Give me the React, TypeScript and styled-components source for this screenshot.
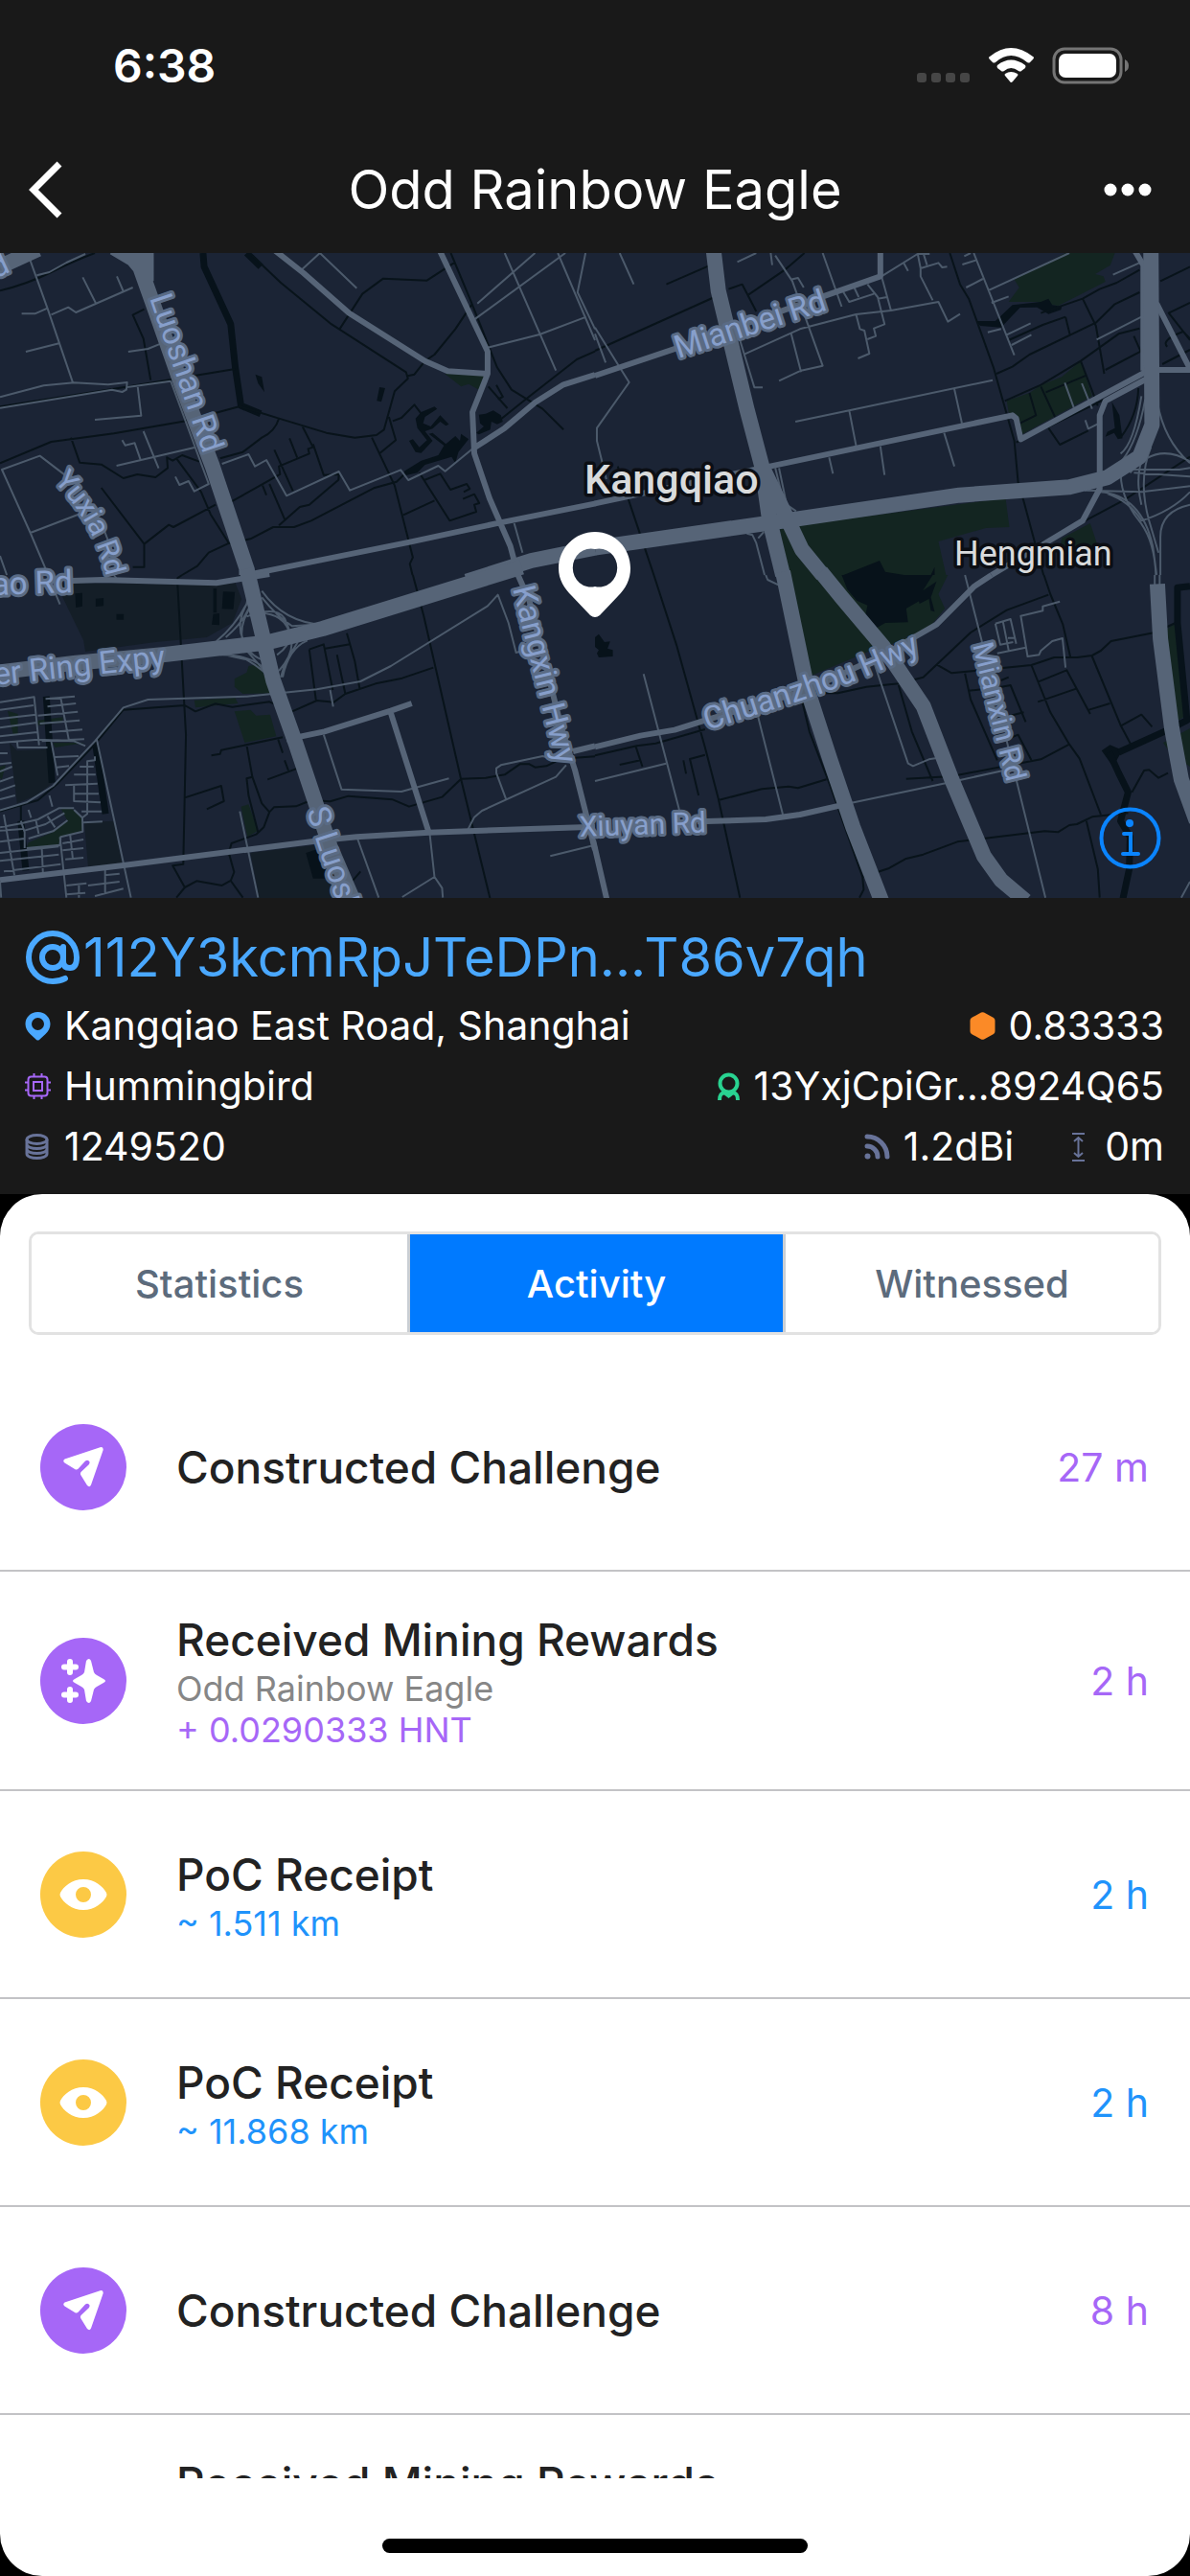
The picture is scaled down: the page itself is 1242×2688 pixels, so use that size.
import React, { useState } from "react";
import styled, { createGlobalStyle } from "styled-components";

const colors = {
  chrome: "#191919",
  sky: "#4aa8ff",
  purple: "#a667f7",
  amber: "#fcc945",
  blue: "#1f93fb",
  slate: "#687399",
  ink: "#222222",
};

const GlobalStyle = createGlobalStyle`
  * { box-sizing: border-box; }
  body {
    margin: 0;
    background: #000;
    font-family: Inter, "Liberation Sans", sans-serif;
    -webkit-font-smoothing: antialiased;
  }
  button { font: inherit; border: 0; background: none; padding: 0; cursor: pointer; }
  p, h1, h2, ul { margin: 0; padding: 0; }
  svg { display: block; flex: none; }
`;

const Screen = styled.main`
  display: flex;
  flex-direction: column;
  height: 100vh;
  overflow: hidden;
  background: #000;
`;

const StatusBar = styled.div`
  display: flex;
  align-items: center;
  justify-content: space-between;
  height: 132px;
  padding: 4px 64px 0 118px;
  background: ${colors.chrome};
  color: #fff;
  font-size: 48px;
  font-weight: 600;
  flex: none;
`;

const StatusIcons = styled.div`
  display: flex;
  align-items: center;
`;

const NavBar = styled.header`
  display: grid;
  grid-template-columns: 120px 1fr 120px;
  align-items: center;
  height: 132px;
  padding: 0 30px;
  background: ${colors.chrome};
  color: #fff;
  flex: none;
`;

const NavTitle = styled.h1`
  font-size: 56px;
  line-height: 72px;
  font-weight: 400;
  text-align: center;
  white-space: nowrap;
`;

const NavButton = styled.button<{ $end?: boolean }>`
  display: flex;
  align-items: center;
  justify-content: ${(p) => (p.$end ? "flex-end" : "flex-start")};
  height: 88px;
  padding-right: ${(p) => (p.$end ? "10px" : "0")};
  color: #fff;
`;

const MapPanel = styled.section`
  position: relative;
  height: 673px;
  background: #1b2435;
  overflow: hidden;
  flex: none;
`;

const MapInfoButton = styled.button`
  position: absolute;
  right: 30px;
  bottom: 30px;
  width: 65px;
  height: 65px;
`;

const Details = styled.section`
  display: flex;
  flex-direction: column;
  padding: 21px 27px 18px 26px;
  background: ${colors.chrome};
  color: #fff;
  flex: none;
`;

const Address = styled.h2`
  display: flex;
  align-items: center;
  gap: 3px;
  height: 81px;
  font-size: 56px;
  line-height: 80px;
  font-weight: 400;
  color: ${colors.sky};
`;

const DetailRow = styled.div`
  display: flex;
  justify-content: space-between;
  height: 63px;
`;

const DetailGroup = styled.div`
  display: flex;
  gap: 54px;
`;

const Detail = styled.span`
  display: flex;
  align-items: center;
  gap: 14px;
  font-size: 41px;
  line-height: 63px;
  white-space: nowrap;
`;

const Sheet = styled.section`
  display: flex;
  flex-direction: column;
  flex: 1;
  min-height: 0;
  padding-top: 39px;
  background: #fff;
  border-radius: 44px;
`;

const Tabs = styled.div`
  display: grid;
  grid-template-columns: repeat(3, 1fr);
  height: 108px;
  margin: 0 30px 30px;
  border: 3px solid #e2e2e2;
  border-radius: 10px;
  overflow: hidden;
  flex: none;
`;

const Tab = styled.button<{ $active: boolean }>`
  background: ${(p) => (p.$active ? "#007aff" : "#fff")};
  color: ${(p) => (p.$active ? "#fff" : "#5c6b7c")};
  font-size: 40px;
  font-weight: 500;

  & + & {
    border-left: 3px solid #c9ced4;
  }
`;

const ActivityList = styled.ul`
  flex: 1;
  min-height: 0;
  overflow: hidden;
  list-style: none;
`;

const ActivityRow = styled.li`
  display: flex;
  align-items: center;
  min-height: 217px;
  padding: 41px 43px 40px 42px;
  border-bottom: 2px solid #c3c3c6;
`;

const Badge = styled.span<{ $color: string }>`
  display: flex;
  align-items: center;
  justify-content: center;
  width: 90px;
  height: 90px;
  margin-right: 52px;
  border-radius: 50%;
  background: ${(p) => p.$color};
  color: #fff;
  flex: none;
`;

const RowBody = styled.div`
  flex: 1;
`;

const RowTitle = styled.p`
  font-size: 46px;
  line-height: 60px;
  font-weight: 500;
  color: ${colors.ink};
`;

const RowNote = styled.p<{ $color: string }>`
  font-size: 36px;
  line-height: 43px;
  color: ${(p) => p.$color};
`;

const RowTime = styled.time<{ $color: string }>`
  font-size: 41px;
  color: ${(p) => p.$color};
`;

const HomeArea = styled.footer`
  display: flex;
  justify-content: center;
  height: 102px;
  padding-top: 63px;
  flex: none;
`;

const HomeIndicator = styled.span`
  width: 444px;
  height: 15px;
  border-radius: 8px;
  background: #000;
`;

const MapSvg = styled.svg`
  width: 100%;
  height: 100%;

  path { vector-effect: non-scaling-stroke; stroke-linejoin: round; }
`;

const RoadLabel = styled.text<{ $small?: boolean }>`
  font-family: Roboto, "Liberation Sans", sans-serif;
  font-size: ${(p) => (p.$small ? 30 : 33)}px;
  fill: #879fcb;
  stroke: #5a6b84;
  stroke-width: 6px;
  stroke-linejoin: round;
  paint-order: stroke;
`;

const PlaceLabel = styled.text<{ $size: number; $weight: number }>`
  font-family: Roboto, "Liberation Sans", sans-serif;
  font-size: ${(p) => p.$size}px;
  font-weight: ${(p) => p.$weight};
  fill: #d9dbdc;
  stroke: #0b0e14;
  stroke-width: 7px;
  stroke-linejoin: round;
  paint-order: stroke;
`;

/* Map geometry, one entry for each quarter of the map. */
type Tile = {
  origin: [number, number];
  ground?: string;
  parks: string;
  ponds: string;
  river?: string;
  streams: string;
  lanes: string;
  roads: string;
  ways: string;
};

const tiles: Tile[] = [
  {
    origin: [0, -4],
    parks: "M1172 390 L1282 394 L1262 440 L1235 422 L1215 430Z",
    ponds:
      "M673 392 L690 400 L697 448 L680 420Z M1000 432 L1015 435 L1005 478 L993 475Z M1095 530 L1110 510 L1145 493 L1152 500 L1120 525 L1115 545 L1135 555 L1160 520 L1183 548 L1175 553 L1160 540 L1140 562 L1120 570 L1140 600 L1110 638 L1095 635 L1078 600 L1088 595 L1105 620 L1125 598 L1100 560Z M1065 695 L1110 662 L1155 645 L1170 615 L1130 578 L1140 575 L1175 610 L1200 585 L1212 600 L1215 578 L1235 595 L1208 635 L1200 670 L1190 650 L1120 675 L1100 700 L1070 708Z M1255 575 L1275 555 L1265 545 L1262 518 L1280 515 L1300 505 L1320 520 L1325 540 L1310 548 L1295 540 L1292 565 L1262 580Z",
    river: "M535 12 L538 55 L608 235 L620 370 L635 490 L687 515 M650 12 L687 55",
    streams:
      "M0 130 Q70 110 135 72 T250 12 M380 188 L350 206 L378 280 L397 410 M0 493 L340 430 L620 375 M0 670 L135 603 L300 577 L490 538 L632 492 L735 530 L860 575 L935 590 L992 582 L1012 565 L1040 445 L1075 405 L1070 385 L870 232 L740 105 L665 20 M895 250 L955 140 L1010 92 L1125 98 L1200 40 M1188 12 L1240 160 L1310 370 L1348 440 L1430 500 L1485 565 M1245 170 L1200 250 L1145 330 L1120 350 L1092 392 L1075 397 M187 590 L210 668 L267 674 L325 717 L362 705 L410 714 L442 685 L440 652 L455 662 L480 645 L525 665 M465 655 L530 760 L555 830 L603 920 M267 747 L380 923 L380 995 L350 995 M380 923 L445 863 L457 870 L568 800 M480 1020 L520 992 L550 950 L600 922 L660 907 L720 870 L775 870 L820 850 L985 748 L1045 728 L1070 700 M735 530 Q725 570 690 590 L640 635 L580 655 M797 555 L825 620 L812 625 L815 640 L735 680 L738 705 L610 790 M825 610 L853 707 L893 705 L892 722 L815 800 L790 807 L735 865 M763 592 L783 652 M723 628 L772 757 M710 735 L750 845 M692 740 L702 770 M980 590 L1000 640 L1040 740 L1088 965 L1080 985 L1087 1020 M1000 640 L1043 598 L1025 525 M1035 538 L1058 528 L1092 487 L1110 515 M1105 700 L1185 850 L1255 822 L1250 800 L1263 795 L1250 767 L1220 782 M1118 723 L1160 703 L1187 753 L1230 735 L1238 750 L1222 760 M1145 787 L1063 832 M1322 530 L1385 470 L1520 345 L1568 320 M1287 430 L1337 498 M1308 425 L1325 462 L1312 470",
    lanes:
      "M75 20 L125 185 L192 418 M97 82 L130 72 L175 42 L225 15 M57 202 H92 L125 185 M135 205 L180 182 L200 198 L350 120 M218 88 L252 168 M308 85 L325 132 M68 321 L158 294 M338 321 L390 312 L425 295 M0 463 L115 427 L195 418 L285 424 L335 417 L333 440 L322 447 L295 440 L0 497 M335 432 L450 413 M363 432 L372 521 L250 534 M307 678 L515 620 M378 570 L418 686 M322 598 L330 614 L355 607 L370 658 M450 413 L550 735 L512 758 L497 726 L473 738 L462 712 M585 672 L655 642 L672 680 L702 660 L755 772 L893 696 L922 755 L1056 691 L1076 723 L1155 678 L1173 695 L1250 620 M180 715 L105 647 L5 690 L80 888 L120 1000 M80 888 L225 822 M265 850 L305 975 V1020 M0 960 L18 1020 M790 70 L843 12 L940 122 M1258 170 L1410 12 M1250 220 L1490 12 M1330 12 L1465 380 M1470 12 L1568 285 M1543 12 L1522 135 L1568 250 M1285 308 L1422 267 L1545 212 M1355 858 L1377 950",
    roads:
      "M720 0 L800 75 L920 200 L1120 350 L1180 382 L1285 390 M1157 0 L1285 320 V390 L1245 510 L1250 640 L1290 780 L1345 930 L1365 1020 M1250 622 L1330 560 L1410 480 L1485 424 L1568 393 M670 1015 L1080 917 L1315 857 L1570 796",
    ways:
      "M300 -5 L350 30 L385 80 M385 0 L385 100 M355 10 L400 160 L480 430 L560 680 L650 1000 V1020 M-10 60 L100 0 M1568 935 L1400 975 L1230 1040",
  },
  {
    origin: [621, -4],
    parks:
      "M1105 95 L1240 12 H1370 L1358 50 L1318 78 L1340 85 L1345 102 L1220 178 L1165 165 L1090 165 L1118 120Z M1085 475 L1145 450 L1175 425 L1230 400 L1280 350 L1310 460 L1125 580 L1118 530 L1090 510Z M530 865 L1082 780 L1092 870 L1030 873 L905 915 L925 1020 H600Z M487 875 H510 L590 1020 H510Z M1230 905 L1305 858 L1325 930 L1225 935Z",
    ponds:
      "M1005 225 H1055 L1100 175 L1175 165 L1195 155 L1205 175 L1230 180 L1228 190 L1195 203 L1165 182 L1120 183 L1070 245 L1015 240Z M1362 478 L1382 520 L1390 592 L1378 595 L1368 575 L1345 587 L1350 572 L1370 560Z M655 1020 L750 975 L765 1010 L815 1020Z M885 1020 L895 995 V1020Z",
    streams:
      "M188 110 L300 52 M352 125 L388 110 L425 195 M405 142 L500 65 L552 12 M0 318 L315 150 M935 12 L962 110 L985 155 L1050 370 L1105 600 L1115 730 L1130 790 L1182 1020 M1568 55 L1490 100 M1435 65 L1375 105 L1330 125 L1285 155 L1175 200 M1285 155 L1320 240 L1342 390 M1435 135 L1370 172 L1320 230 L1145 330 L1100 368 L1058 390 M1435 248 L1380 265 L1280 350 L1175 425 L1080 475 M1240 212 L1180 237 L1090 285 M1240 212 L1252 270 M1280 350 L1325 490 M1145 450 L1162 520 L1120 545 M1175 430 L1212 525 M1188 448 L1295 395 M1110 605 L1455 405 M1195 560 L1225 612 L1300 568 M1432 435 Q1430 520 1385 590 M1420 272 L1438 320 L1345 378 M1568 168 L1512 200 L1568 285 M1508 305 Q1490 285 1550 258 L1568 280 M1495 360 L1568 315 M60 680 L90 790 L155 1020 M1150 930 L1205 905 L1395 785 L1568 650",
    lanes:
      "M65 12 L102 110 M375 40 L425 12 M463 12 L467 50 M475 20 L520 100 L600 365 L543 380 L485 412 M515 95 L535 90 L550 120 M600 12 L650 180 M395 328 L540 250 L688 204 L780 192 L905 165 L930 227 L962 203 M382 285 L420 433 H442 M517 265 L543 385 M688 204 L698 250 L710 255 L723 327 L693 342 M718 110 L745 150 L763 235 L735 248 L740 272 L718 282 M755 85 L780 192 M650 125 L670 165 L735 140 M683 120 L695 150 M745 155 L770 150 M755 85 L850 15 H882 M850 12 L858 60 L905 43 L915 57 L928 55 M858 60 V85 L890 160 M865 12 L875 50 M812 40 L825 68 M998 12 L1105 332 M973 22 L990 12 M968 48 L1003 35 M978 120 L1022 93 M1035 130 L1250 12 M1045 168 L1090 148 M1085 268 L1148 232 M1035 260 L1070 250 M1098 300 L1150 268 M1365 80 L1440 40 M1322 283 L1440 212 M0 245 L65 370 L90 417 L5 560 V600 L30 720 M0 265 L28 355 M528 540 L670 505 L1048 410 M670 505 L688 615 M947 438 L967 545 M920 575 L947 680 M752 617 L763 707 M617 652 L627 703 M1238 418 L1262 497 M1283 420 L1310 500 M1292 535 L1300 562 L1325 547 M485 685 L505 800 L530 820 M475 685 L497 790 M400 890 L415 895 L425 920 L447 1020 M445 885 L430 905 M1450 470 Q1430 600 1390 660 Q1370 760 1440 860 Q1475 920 1478 1020 M1440 460 Q1420 610 1385 640 M1482 480 Q1500 600 1568 670 M1410 700 Q1480 600 1568 665 M1420 690 H1540 L1568 685 M1420 700 L1568 712 M1290 755 L1440 760 L1568 742 M1330 760 Q1440 770 1470 930 L1480 1020 M1350 765 Q1410 790 1440 850 Q1520 820 1568 760 M1465 620 Q1430 720 1460 850 L1485 950 M1450 640 Q1420 700 1440 800 M1568 800 Q1490 820 1490 900 V1020",
    roads:
      "M0 396 L215 310 L500 190 L752 85 V0 M0 796 L440 685 L1100 520 L1110 530 L1122 595 L1450 385 M1045 1020 L1215 900 L1285 850 L1330 750 V520 L1345 475 L1455 405 M1480 170 L1568 375 M1450 378 H1568 M1420 0 L1445 50 V380",
    ways:
      "M312 0 L325 130 L400 500 L440 680 L460 850 L495 1020 M440 680 L505 840 L545 940 L600 1020 M0 935 L500 850 L960 770 L1250 745 L1350 715 L1435 650 L1468 550 L1465 0",
  },
  {
    origin: [0, 336],
    ground:
      "M165 25 L570 30 L620 25 L637 75 L612 150 L545 195 L410 210 L225 240 L220 205 L165 70Z M25 525 L45 550 L130 545 L140 650 L95 690 L45 715Z M222 775 L300 770 L322 905 L232 912Z M660 870 L830 845 L900 1010 L870 1020 H685Z",
    parks:
      "M655 285 L680 280 L705 330 L715 370 L640 372 L618 350 V325 L650 305Z M512 392 L620 385 L627 402 L515 415Z M618 427 L660 422 L675 440 L712 437 L728 505 L645 525Z M635 725 L655 718 L680 800 L652 820Z M160 730 L190 732 L218 765 V800 L160 820 L155 845 L70 853 L75 838 L140 805 L178 770Z M20 425 L47 435 V497 L35 500Z M100 455 L165 445 V462 L100 470Z M140 525 H225 L145 540Z M0 600 L15 595 L5 640 L0 635Z",
    ponds:
      "M198 58 L217 56 V98 L200 102Z M252 74 L273 72 V97 L252 99Z M307 122 H326 V140 H307Z M588 52 L619 53 L615 107 L585 106Z M562 42 H571 V118 H562Z M562 122 L578 120 V157 L558 155Z M806 870 L845 855 L880 950 H825Z",
    river: "M122 380 L137 650 M252 530 L278 748 M55 770 L68 925",
    streams:
      "M467 10 L490 500 L483 905 L455 910 L487 978 L465 1010 M480 0 L467 10 M1088 0 L1117 130 L1215 640 L1293 1020 M0 740 L100 705 L150 655 L250 530 L325 422 L487 408 L515 427 L567 403 L612 413 L710 397 L770 427 L835 393 L880 398 L910 372 L990 340 L1060 323 L1142 290 M815 233 L853 217 L877 360 M815 233 L833 395 M857 230 L922 217 M914 182 L935 270 L948 357 M888 250 L910 372 M557 565 L580 560 L583 548 L745 508 M650 532 L665 632 L690 715 L710 742 L695 790 L675 812 L610 840 L603 870 L617 930 L608 957 L585 972 L518 958 L487 978 M608 957 L640 1010 M733 515 L745 557 M750 580 L760 612 M705 640 L785 605 M665 632 L650 637 L655 690 L680 805 M487 697 L583 660 L590 708 L545 733 M710 742 L722 727 L780 724 L820 705 L870 709 L918 692 L1035 703 L1078 725 L1165 695 L1215 638 L1280 635 L1330 625 L1370 592 H1395 L1410 602 L1440 598 L1480 575 L1568 568 M55 720 V770 M920 970 L950 928",
    lanes:
      "M0 737 L70 712 L140 660 L250 520 L325 415 L390 390 L650 380 L835 358 L950 333 L1030 285 L1285 97 L1312 62 L1340 150 L1360 243 L1385 235 M870 360 L878 412 M853 500 L900 671 L1058 678 L1183 637 M255 515 L345 1010 M1450 880 L1568 845 M1233 797 L1250 758 L1270 738 L1465 632 L1492 595 M1333 700 L1308 620 V605 L1320 595 L1430 567 L1470 580 M1132 805 L1145 945 L1165 980 L1167 1010 M1145 945 L1060 1008 M942 825 L998 1010 M632 740 L680 1010 M300 0 L308 12 M140 40 L158 92 M655 60 L650 90 Q620 160 570 208 M665 75 Q650 140 595 195 M655 80 Q620 150 640 200 Q660 270 720 270 M672 80 Q620 160 645 230 L715 325 M690 50 Q750 150 850 155 M690 70 Q730 130 770 160 L830 155 M650 130 Q740 90 755 150 Q780 210 730 250 M665 120 Q750 110 765 190 Q780 240 735 300 M580 250 Q690 250 718 330 M600 252 L650 265 Q700 300 725 340 M810 205 Q760 230 745 320 M785 210 Q750 270 740 320 M0 398 L90 382 L103 533 M160 385 L182 520 M0 422 L88 408 M0 450 L95 437 M0 478 L97 462 M0 505 L98 492 M0 525 L100 515 L195 520 L225 535 M120 388 L197 380 M125 412 L200 402 M100 440 L205 428 M105 465 L210 455 M130 492 L217 484 M110 520 L222 514 M45 520 L47 540 H125 M135 520 L152 628 M145 570 L207 567 M150 602 L182 598 M250 568 V580 L230 583 V748 L217 760 L195 735 M172 658 L257 653 M195 658 V708 L265 712 M195 625 H252 M195 685 H260 M210 600 H247 M215 740 H268 M0 558 H20 M0 592 L30 588 M0 615 L32 600 M0 647 L35 632 M0 675 L40 658 M0 702 L40 690 M0 790 L55 778 L100 765 L155 730 H195 M65 800 L120 780 L170 745 M75 825 L140 802 L178 768 M55 770 L65 805 V855 M10 750 L38 940 M0 800 L60 795 M0 835 L65 825 M0 870 L155 850 M0 895 L155 875 M10 928 L160 905 M70 855 L158 845 L160 820 L218 803 L217 760 M158 820 L175 1010 M110 850 L113 930 M185 815 L192 890 M165 840 L220 828 M165 862 L220 855 M172 890 L220 885 M75 735 L82 760 M130 690 L138 725 M95 770 L102 810 M125 755 L145 790 M277 920 V998 M232 972 L315 960 M250 1005 L325 982 M275 940 L315 935 M175 972 L228 965 M208 968 V1010 M175 1000 L225 995 M0 960 L3 1010 M220 775 L270 772",
    roads:
      "M190 18 L270 15 L570 25 L710 -3 M0 955 L320 910 L650 860 L850 830 L940 820 L1130 806 L1568 788 M1365 0 L1395 80 L1480 480 L1515 610 L1568 860 M755 515 L855 490 L1030 425 L1085 402 M1028 425 L1130 806 M1510 552 L1568 535",
    ways:
      "M650 -20 L720 330 L780 530 L870 850 L935 1030 M-10 305 L200 275 L440 248 L700 212 L850 168 L1375 -25",
  },
  {
    origin: [621, 336],
    parks:
      "M513 0 H590 L745 210 L850 190 L720 240 L570 315Z M590 0 H930 L905 60 L922 105 L870 180 L745 215Z M1500 175 L1530 150 L1558 440 L1530 460Z M1497 525 L1568 480 V600 L1515 555Z",
    ponds:
      "M650 0 H890 L858 60 L868 72 L820 105 L825 148 L765 150 L735 170 L712 130 L718 95 L690 80 L665 45Z M850 60 L900 20 L885 70 L895 115 L885 112 L880 75 L855 90Z M0 195 L10 185 L25 210 L40 208 L33 230 L47 235 V255 L10 258 L5 245 L10 235 L0 225Z M1335 550 L1357 532 L1390 548 L1365 600Z",
    river:
      "M1568 35 L1535 40 V150 L1560 455 L1510 485 L1380 555 M1355 555 L1380 620 L1405 680 L1385 770 L1410 820 L1408 920 L1390 1020",
    streams:
      "M155 0 L215 220 L290 540 L325 700 L382 1010 M0 565 L110 535 L160 527 L290 483 M107 535 L125 600 M65 594 L120 580 M233 580 L240 622 M290 563 L250 576 L273 690 M325 705 L440 670 L510 662 L535 667 L610 640 M545 390 L565 490 L620 660 L705 945 L708 985 L697 1010 M585 370 L640 370 L715 350 L800 340 L865 320 L990 180 L1085 110 L1195 62 M1183 0 L1200 60 L1233 155 L1253 258 M900 280 L940 307 L1000 300 L1150 282 L1210 258 H1270 L1310 252 L1333 237 L1360 207 L1475 180 M1475 180 L1530 150 M800 345 L835 490 L890 645 M820 638 L940 630 L1175 577 L1250 530 M975 308 L990 390 L1060 580 M1150 282 L1200 430 L1250 530 L1277 575 L1333 750 M1167 335 L1243 298 L1305 435 M1167 397 L1270 355 M1302 422 L1357 402 M1310 255 L1385 470 L1412 530 M1385 473 L1440 437 L1468 475 M985 362 L1065 352 L1095 345 L1135 460 M1070 330 L1090 320 M1095 440 L1130 430 M1085 515 L1115 500 L1150 580 M705 945 L775 918 L820 888 L865 875 L955 835 L1185 802 L1220 805 L1250 783 L1270 780 L1310 757 L1405 745 M1295 770 L1325 920 L1330 1010 M1415 680 L1447 612 L1460 610 L1485 635 L1510 620",
    lanes:
      "M128 310 L222 735 M0 645 L187 590 M430 445 L495 750 M670 715 L930 650 L1085 610 M737 280 L825 590 L838 598 L880 577 L905 572 M975 0 L1020 210 M1085 520 L1187 1010 M1060 245 L1135 227 M1055 152 L1095 138 L1110 215 M1055 152 L1068 218 L1102 210 M1075 145 L1090 235 M1088 197 H1105 M1225 83 L1180 98 V112 L1122 128 L1140 255 L1170 250 L1175 237 L1205 207 L1232 198 L1240 290 M450 0 L455 15 L490 35 M1475 0 V40 M1488 0 V40 M1568 960 L1545 1010",
    roads:
      "M0 538 L120 503 L210 485 L290 455 L560 360 L760 250 L900 155 L1000 35 L1045 0 M270 772 L450 765 L540 750 L670 715 M-5 830 L32 1020",
    ways:
      "M495 -10 L560 360 L620 580 L680 790 L755 1020 M595 -10 L650 70 L760 225 L865 410 L940 640 L1025 880 L1070 955 L1135 1020 M1482 28 L1490 200 L1520 480 L1545 640 L1585 770",
  },
];

function TileLayer({ draw }: { draw: (tile: Tile) => React.ReactNode }) {
  return (
    <>
      {tiles.map((tile) => (
        <g
          key={tile.origin.join()}
          transform={`translate(${tile.origin[0]} ${tile.origin[1]}) scale(0.39605 0.33333)`}
        >
          {draw(tile)}
        </g>
      ))}
    </>
  );
}

function CityMap() {
  return (
    <MapSvg viewBox="0 0 1242 673" preserveAspectRatio="xMidYMid slice" role="img" aria-label="Map of Kangqiao">
      <defs>
        <path id="yuxia" d="M56 238 Q92 275 107 322 L117 360" />
        <path id="chuanzhou" d="M738 498 L827 470 Q910 443 975 409" />
      </defs>
      <TileLayer
        draw={(t) => (
          <>
            {t.ground && <path d={t.ground} fill="#141e27" />}
            <path d={t.parks} fill="#132521" />
            <path d={t.ponds} fill="#07121a" />
            {t.river && <path d={t.river} fill="none" stroke="#07121a" strokeWidth="7" />}
            <path d={t.streams} fill="none" stroke="#08131a" strokeWidth="2" />
          </>
        )}
      />
      <TileLayer draw={(t) => <path d={t.lanes} fill="none" stroke="#4c5a6b" strokeWidth="2" />} />
      <TileLayer draw={(t) => <path d={t.roads} fill="none" stroke="#566477" strokeWidth="6" />} />
      <TileLayer draw={(t) => <path d={t.ways} fill="none" stroke="#566477" strokeWidth="16" />} />

      <RoadLabel transform="translate(-5 27) rotate(-25)">d</RoadLabel>
      <RoadLabel transform="translate(156 47) rotate(71)">Luoshan Rd</RoadLabel>
      <RoadLabel $small><textPath href="#yuxia">Yuxia Rd</textPath></RoadLabel>
      <RoadLabel transform="translate(76 354) rotate(-2)" textAnchor="end">ao Rd</RoadLabel>
      <RoadLabel transform="translate(173 432) rotate(-6)" textAnchor="end">er Ring Expy</RoadLabel>
      <RoadLabel transform="translate(320 582) rotate(72)">S Luosh</RoadLabel>
      <RoadLabel transform="translate(535 350) rotate(76)">Kangxin Hwy</RoadLabel>
      <RoadLabel transform="translate(708 110) rotate(-18)">Mianbei Rd</RoadLabel>
      <RoadLabel><textPath href="#chuanzhou">Chuanzhou Hwy</textPath></RoadLabel>
      <RoadLabel $small transform="translate(1015 409) rotate(76)">Mianxin Rd</RoadLabel>
      <RoadLabel $small transform="translate(605 609) rotate(-2)">Xiuyan Rd</RoadLabel>
      <PlaceLabel $size={43} $weight={500} x="610" y="251">Kangqiao</PlaceLabel>
      <PlaceLabel $size={36} $weight={400} x="996" y="326">Hengmian</PlaceLabel>

      <path
        fill="#fff"
        fillRule="evenodd"
        d="M621 291 C642 291 658 308 658 329 C658 341 653 350 645 358 L626 378 Q621 382 616 378 L597 358 C589 350 583 341 583 329 C583 308 600 291 621 291Z M621 309 A19 20 0 1 0 621 348 A19 20 0 1 0 621 309Z"
      />
    </MapSvg>
  );
}

const PinIcon = () => (
  <svg width="27" height="30" viewBox="0 0 27 30" fill={colors.sky}>
    <path fillRule="evenodd" d="M13.500 0C21 0 26.500 5.500 26.500 12.500C26.500 17 24.500 20 21.500 23L15 29Q13.500 30 12 29L5.500 23C2.500 20 .5 17 .5 12.500C.5 5.500 6 0 13.500 0ZM13.500 6A6.500 6.500 0 1 0 13.500 19A6.500 6.500 0 1 0 13.500 6Z" />
  </svg>
);

const ChipIcon = () => (
  <svg width="27" height="27" viewBox="0 0 27 27" fill="none" stroke={colors.purple} strokeWidth="2">
    <rect x="3.500" y="3.500" width="20" height="20" rx="3" />
    <rect x="9" y="9" width="9" height="9" />
    <path d="M9.500 0V3M17.500 0V3M9.500 24V27M17.500 24V27M0 9.500H3M0 17.500H3M24 9.500H27M24 17.500H27" />
  </svg>
);

const DatabaseIcon = () => (
  <svg width="27" height="27" viewBox="0 0 27 27" fill="none" stroke={colors.slate} strokeWidth="3">
    <ellipse cx="12.500" cy="6" rx="10.500" ry="4.500" />
    <path d="M2 6V21C2 27 23 27 23 21V6M2 11C2 17 23 17 23 11M2 16C2 22 23 22 23 16" />
  </svg>
);

const HexIcon = () => (
  <svg width="27" height="29" viewBox="0 0 27 29" fill="#fb8a27">
    <path d="M12 .5Q13.500 0 15 .5L25 6Q26.500 7 26.500 9V20Q26.500 22 25 23L15 28.500Q13.500 29 12 28.500L2 23Q.5 22 .5 20V9Q.5 7 2 6Z" />
  </svg>
);

const RibbonIcon = () => (
  <svg width="25" height="29" viewBox="0 0 25 29" fill="none" stroke="#29d391" strokeWidth="4">
    <circle cx="12.500" cy="11.500" r="9" />
    <path d="M3 29Q3 21 8.500 21.500L12.500 24.500L16.500 21.500Q22 21 22 29" />
  </svg>
);

const SignalIcon = () => (
  <svg width="27" height="27" viewBox="0 0 27 27" fill="none" stroke={colors.slate} strokeWidth="5" strokeLinecap="round">
    <circle cx="3.500" cy="23.500" r="3" fill={colors.slate} stroke="none" />
    <path d="M3 13A11 11 0 0 1 14 24M3 3A21 21 0 0 1 24 24" />
  </svg>
);

const HeightIcon = () => (
  <svg width="27" height="30" viewBox="0 0 27 30" fill="none" stroke={colors.slate} strokeWidth="2">
    <path d="M7 1H20M7 29H20M13.500 5V25M9 9L13.500 5L18 9M9 21L13.500 25L18 21" />
  </svg>
);

const SendIcon = () => (
  <svg width="42" height="42" viewBox="0 0 42 42" fill="currentColor">
    <path d="M38.500 .2Q42.200 -.4 41.600 3.200L29 39.500Q27.500 42.500 25 40L18.200 29Q17.500 27.500 18.500 26L26.500 18.500Q28.500 16 26.800 14.500Q25 13 22.800 14.800L15.500 22.800Q14 24 12.500 23.200L1.500 16.500Q-1 14.500 1.500 12.500Z" />
  </svg>
);

const SparkleIcon = () => (
  <svg width="46" height="46" viewBox="0 0 46 46" fill="currentColor">
    <path d="M26 2Q29-2 31 2L34 14Q35 16 37 17L44 21Q48 23 44 25L37 29Q35 30 34 32L31 44Q29 48 26 44L24 32Q23 30 21 29L14 25Q10 23 14 21L21 17Q23 16 24 14Z" />
    <path d="M9 3V14M3 8.500H15M9 32V43M3 37.500H15" stroke="currentColor" strokeWidth="6" strokeLinecap="round" />
  </svg>
);

const EyeIcon = () => (
  <svg width="50" height="34" viewBox="0 0 50 34" fill="currentColor">
    <path fillRule="evenodd" d="M25 1C37 1 46 9 49 15Q50 17 49 19C46 25 37 33 25 33C13 33 4 25 1 19Q0 17 1 15C4 9 13 1 25 1ZM25 9A8 8 0 1 0 25 25A8 8 0 1 0 25 9Z" />
  </svg>
);

type Activity = {
  kind: "challenge" | "reward" | "receipt";
  title: string;
  time: string;
  notes: { text: string; color: string }[];
};

const kinds = {
  challenge: { badge: colors.purple, accent: colors.purple, Icon: SendIcon },
  reward: { badge: colors.purple, accent: colors.purple, Icon: SparkleIcon },
  receipt: { badge: colors.amber, accent: colors.blue, Icon: EyeIcon },
};

const rewardNotes = [
  { text: "Odd Rainbow Eagle", color: "#868686" },
  { text: "+ 0.0290333 HNT", color: colors.purple },
];

const activities: Activity[] = [
  { kind: "challenge", title: "Constructed Challenge", time: "27 m", notes: [] },
  { kind: "reward", title: "Received Mining Rewards", time: "2 h", notes: rewardNotes },
  { kind: "receipt", title: "PoC Receipt", time: "2 h", notes: [{ text: "~ 1.511 km", color: colors.blue }] },
  { kind: "receipt", title: "PoC Receipt", time: "2 h", notes: [{ text: "~ 11.868 km", color: colors.blue }] },
  { kind: "challenge", title: "Constructed Challenge", time: "8 h", notes: [] },
  { kind: "reward", title: "Received Mining Rewards", time: "8 h", notes: rewardNotes },
];

const tabNames = ["Statistics", "Activity", "Witnessed"];

export default function App() {
  const [tab, setTab] = useState("Activity");

  return (
    <Screen>
      <GlobalStyle />
      <StatusBar>
        <time>6:38</time>
        <StatusIcons>
          <svg width="222" height="40" viewBox="956 47 222 40">
            <g fill="#464646">
              <rect x="957" y="75" width="10" height="10" rx="3" />
              <rect x="972" y="75" width="10" height="10" rx="3" />
              <rect x="987" y="75" width="10" height="10" rx="3" />
              <rect x="1002" y="75" width="10" height="10" rx="3" />
            </g>
            <g fill="#fff">
              <path d="M1033 58Q1055 40 1078 58Q1080 59 1078 61L1075 64Q1074 65 1072 64Q1055 50 1039 64Q1037 65 1036 64L1033 61Q1031 59 1033 58Z" />
              <path d="M1041 67Q1055 56 1070 67Q1071 68 1070 70L1066 73Q1065 74 1063 73Q1055 67 1048 73Q1046 74 1045 73L1041 70Q1040 68 1041 67Z" />
              <path d="M1049 76Q1055 72 1062 76Q1063 77 1062 78L1057 84Q1055 86 1054 84L1049 78Q1048 77 1049 76Z" />
              <rect x="1105" y="55" width="60" height="25" rx="7" />
            </g>
            <rect x="1100" y="50" width="70" height="35" rx="11" fill="none" stroke="#757575" strokeWidth="3" />
            <path d="M1174 61Q1178 63 1178 67.500Q1178 72 1174 74Z" fill="#757575" />
          </svg>
        </StatusIcons>
      </StatusBar>

      <NavBar>
        <NavButton aria-label="Back">
          <svg width="36" height="60" viewBox="0 0 36 60" fill="none" stroke="currentColor" strokeWidth="7">
            <path d="M32 3L5 30L32 57" />
          </svg>
        </NavButton>
        <NavTitle>Odd Rainbow Eagle</NavTitle>
        <NavButton $end aria-label="More">
          <svg width="50" height="14" viewBox="0 0 50 14" fill="currentColor">
            <circle cx="7" cy="7" r="6.500" />
            <circle cx="25" cy="7" r="6.500" />
            <circle cx="43" cy="7" r="6.500" />
          </svg>
        </NavButton>
      </NavBar>

      <MapPanel>
        <CityMap />
        <MapInfoButton aria-label="Map information">
          <svg width="65" height="65" viewBox="0 0 65 65" fill="none" stroke="#0a84ff" strokeWidth="4">
            <circle cx="32.500" cy="32.500" r="30" />
            <circle cx="32" cy="17" r="4" fill="#0a84ff" stroke="none" />
            <path d="M26 28H33V49M25 49H41" strokeLinecap="round" />
          </svg>
        </MapInfoButton>
      </MapPanel>

      <Details>
        <Address>
          <svg width="58" height="56" viewBox="0 0 58 56" fill="none" stroke="currentColor" strokeWidth="6" strokeLinecap="round">
            <circle cx="29" cy="28" r="11" />
            <path d="M40 17V32Q40 39 47 39Q54 39 54 28A25 25 0 1 0 29 53Q36 53 42 50" />
          </svg>
          112Y3kcmRpJTeDPn...T86v7qh
        </Address>
        <DetailRow>
          <Detail><PinIcon />Kangqiao East Road, Shanghai</Detail>
          <Detail><HexIcon />0.83333</Detail>
        </DetailRow>
        <DetailRow>
          <Detail><ChipIcon />Hummingbird</Detail>
          <Detail><RibbonIcon />13YxjCpiGr...8924Q65</Detail>
        </DetailRow>
        <DetailRow>
          <Detail><DatabaseIcon />1249520</Detail>
          <DetailGroup>
            <Detail><SignalIcon />1.2dBi</Detail>
            <Detail><HeightIcon />0m</Detail>
          </DetailGroup>
        </DetailRow>
      </Details>

      <Sheet>
        <Tabs role="tablist">
          {tabNames.map((name) => (
            <Tab key={name} role="tab" aria-selected={tab === name} $active={tab === name} onClick={() => setTab(name)}>
              {name}
            </Tab>
          ))}
        </Tabs>
        <ActivityList>
          {activities.map(({ kind, title, time, notes }, i) => {
            const { badge, accent, Icon } = kinds[kind];
            return (
              <ActivityRow key={i}>
                <Badge $color={badge}><Icon /></Badge>
                <RowBody>
                  <RowTitle>{title}</RowTitle>
                  {notes.map((note) => (
                    <RowNote key={note.text} $color={note.color}>{note.text}</RowNote>
                  ))}
                </RowBody>
                <RowTime $color={accent}>{time}</RowTime>
              </ActivityRow>
            );
          })}
        </ActivityList>
        <HomeArea><HomeIndicator /></HomeArea>
      </Sheet>
    </Screen>
  );
}
